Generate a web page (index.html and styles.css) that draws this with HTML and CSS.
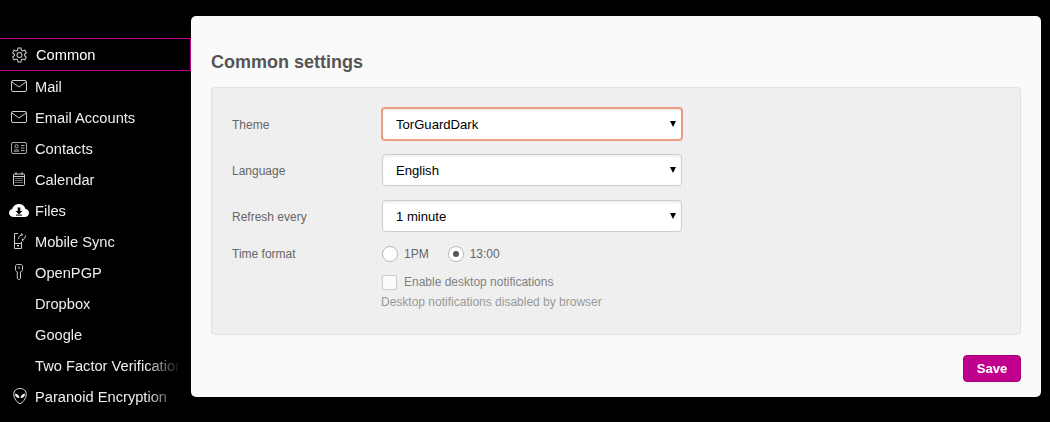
FILE: index.html
```html
<!DOCTYPE html>
<html lang="en">
<head>
<meta charset="utf-8">
<title>Common settings</title>
<link rel="stylesheet" href="styles.css">
</head>
<body>
<div class="app">
  <nav class="sidebar">
    <a class="nav-item active">
      <span class="nav-icon"><svg viewBox="1.4 0.4 13.2 13.4" width="15" height="16" fill="none" stroke="#ccc" stroke-width=".9"><path d="M6.7 1h2.6l.4 2 1.1.6 1.9-.7 1.3 2.3-1.5 1.3v1.2l1.5 1.3-1.3 2.3-1.9-.7-1.1.6-.4 2H6.7l-.4-2-1.1-.6-1.900.7L2 9l1.500-1.300V6.500L2 5.200l1.300-2.300 1.900.7 1.100-.6z"/><circle cx="8" cy="7.100" r="2.200"/></svg></span>
      <span class="nav-label">Common</span>
    </a>
    <a class="nav-item">
      <span class="nav-icon"><svg viewBox="0 0 16 12" width="16" height="12" fill="none" stroke="#ccc"><rect x=".5" y=".5" width="15" height="11" rx="1.500"/><path d="M1 2l7 5 7-5"/></svg></span>
      <span class="nav-label">Mail</span>
    </a>
    <a class="nav-item">
      <span class="nav-icon"><svg viewBox="0 0 16 12" width="16" height="12" fill="none" stroke="#ccc"><rect x=".5" y=".5" width="15" height="11" rx="1.500"/><path d="M1 2l7 5 7-5"/></svg></span>
      <span class="nav-label">Email Accounts</span>
    </a>
    <a class="nav-item">
      <span class="nav-icon"><svg viewBox="0 0 16 12" width="16" height="12" fill="none" stroke="#bbb" stroke-width=".9"><rect x=".5" y=".5" width="15" height="11" rx="1.500"/><circle cx="5.500" cy="4.300" r="1.600"/><path d="M3 9.200c.3-2 4.700-2 5 0zM10 3.500h3.500M10 6h3.500M10 8.500h3.500"/></svg></span>
      <span class="nav-label">Contacts</span>
    </a>
    <a class="nav-item">
      <span class="nav-icon icon-cal"><svg viewBox="0 0 12 14" width="12" height="14" fill="none" stroke="#ccc"><rect x=".5" y="2" width="11" height="11.500" rx="1"/><path d="M3 0v3M9 0v3M.5 4.500h11"/><path d="M2.500 6.500h7M2.500 8.500h7M2.500 10.500h7" stroke-dasharray="1 1"/></svg></span>
      <span class="nav-label">Calendar</span>
    </a>
    <a class="nav-item">
      <span class="nav-icon icon-files"><svg viewBox="0 0 20 13" width="20" height="13"><path fill="#fff" d="M4.500 13C2 13 0 11.300 0 9c0-2 1.400-3.500 3.300-3.900C3.900 2.300 6.500 0 10 0c3.200 0 5.600 1.900 6.300 4.800 2.100.3 3.700 2 3.700 4.100 0 2.300-1.900 4.100-4.300 4.100z"/><path fill="#000" d="M8.700 3.500h2.600v3.400h2.100L10 10.400 6.600 6.900h2.100z"/><rect fill="#000" x="7" y="10.600" width="6" height="1"/></svg></span>
      <span class="nav-label">Files</span>
    </a>
    <a class="nav-item">
      <span class="nav-icon icon-mobile"><svg viewBox="0 0 12 16" width="12" height="16" fill="none" stroke="#ccc"><path d="M4 .5H.5v15h7V8.500M.5 10.500h7"/><path d="M4.500 6C4.500 3.500 6.500 1.500 8.500 1.500M7 .5l1.500 1-1 1.500M11.500 2.500c0 2.500-1.700 4.500-3.500 4.500M9.500 8L8 7l1-1.500"/><rect x="3" y="12" width="2" height="1.500" fill="#ccc" stroke="none"/></svg></span>
      <span class="nav-label">Mobile Sync</span>
    </a>
    <a class="nav-item">
      <span class="nav-icon icon-key"><svg viewBox="0 0 8 16" width="8" height="16" fill="none" stroke="#ccc"><path d="M2.200.5h3.600c1 0 1.700.7 1.700 1.700v3.300c0 1.200-.8 2-2 2.300v6.700l-1.200 1H3.300l-1-1V7.800C1.100 7.500.5 6.700.5 5.500V2.200C.5 1.200 1.200.5 2.200.5z"/><rect x="3.500" y="2.500" width="1" height="2.500" fill="#ccc" stroke="none"/></svg></span>
      <span class="nav-label">OpenPGP</span>
    </a>
    <a class="nav-item"><span class="nav-icon"></span><span class="nav-label">Dropbox</span></a>
    <a class="nav-item"><span class="nav-icon"></span><span class="nav-label">Google</span></a>
    <a class="nav-item"><span class="nav-icon"></span><span class="nav-label">Two Factor Verification</span></a>
    <a class="nav-item">
      <span class="nav-icon icon-alien"><svg viewBox="0 0 14 16" width="14" height="16"><path fill="none" stroke="#ddd" d="M7 .5C3.200.5.700 3 .7 6.300.7 10 4.500 15.500 7 15.500s6.300-5.500 6.300-9.200C13.300 3 10.800.5 7 .5z"/><path fill="#eee" d="M1.800 5.800c2.600-.2 4.600 1.600 4.600 4.200C3.800 10.200 2 8.400 1.800 5.800zM12.200 5.800c-2.600-.2-4.600 1.600-4.600 4.200 2.600.2 4.400-1.600 4.600-4.200z"/></svg></span>
      <span class="nav-label">Paranoid Encryption</span>
    </a>
  </nav>

  <main class="panel">
    <h2 class="panel-title">Common settings</h2>
    <form class="settings">
      <div class="row row-focused">
        <label class="row-label">Theme</label>
        <div class="select-wrap focused"><select class="select"><option>TorGuardDark</option></select></div>
      </div>
      <div class="row row-select">
        <label class="row-label">Language</label>
        <div class="select-wrap"><select class="select"><option>English</option></select></div>
      </div>
      <div class="row row-select">
        <label class="row-label">Refresh every</label>
        <div class="select-wrap"><select class="select"><option>1 minute</option></select></div>
      </div>
      <div class="row row-time">
        <span class="row-label">Time format</span>
        <div class="radios">
          <label class="radio-option"><input class="radio" type="radio" name="tf">1PM</label>
          <label class="radio-option"><input class="radio" type="radio" name="tf" checked>13:00</label>
        </div>
      </div>
      <div class="row row-check">
        <span class="row-label"></span>
        <label class="check-option"><input class="check" type="checkbox" disabled>Enable desktop notifications</label>
      </div>
      <div class="row row-hint">
        <span class="row-label"></span>
        <span class="hint">Desktop notifications disabled by browser</span>
      </div>
    </form>
    <div class="actions"><button class="save" type="button">Save</button></div>
  </main>
</div>
</body>
</html>
```

FILE: styles.css
```css
* { box-sizing: border-box; }
html, body { margin: 0; height: 100%; }
body {
  background: #000;
  font-family: "Liberation Sans", Arial, sans-serif;
  overflow: hidden;
}
.app {
  display: flex;
  align-items: flex-start;
  width: 1050px;
  height: 422px;
  padding-top: 16px;
}
.sidebar {
  width: 191px;
  flex: none;
  padding-top: 22px;
}
.nav-item {
  display: flex;
  align-items: center;
  height: 31px;
  color: #eee;
  font-size: 14.67px;
  padding-left: 11px;
  padding-bottom: 1px;
}
.nav-item.active {
  height: 33px;
  border: 1px solid #c0008c;
  border-left: 0;
  color: #fff;
  padding: 0 0 0 12px;
}
.nav-icon {
  width: 24px;
  flex: none;
  display: flex;
  align-items: center;
}
.nav-icon svg { display: block; }
.icon-cal svg { margin-left: 2px; }
.icon-files svg { margin-left: -2px; }
.icon-mobile svg { margin-left: 3px; }
.icon-key svg { margin-left: 4px; }
.icon-alien svg { margin-left: 2px; }
.nav-label {
  flex: 1;
  min-width: 0;
  white-space: nowrap;
  overflow: hidden;
  margin-right: 10px;
  padding-top: 2px;
  -webkit-mask-image: linear-gradient(to right, #000 76%, transparent 100%);
  mask-image: linear-gradient(to right, #000 76%, transparent 100%);
}
.active .nav-label { padding-top: 0; }
.panel {
  width: 850px;
  height: 381px;
  flex: none;
  background: #fafafa;
  border-radius: 5px;
  padding: 0 20px;
  display: flex;
  flex-direction: column;
}
.panel-title {
  margin: 36px 0 14px;
  font-size: 18px;
  line-height: 21px;
  font-weight: bold;
  color: #555;
}
.settings {
  height: 248px;
  border: 1px solid #e0e0e0;
  border-radius: 4px;
  background: repeating-linear-gradient(to right, #eee 0, #eee 2px, #f0f0f0 2px, #f0f0f0 4px);
  padding: 19px 0 0 20px;
}
.row {
  display: flex;
  align-items: center;
  font-size: 12px;
  color: #666;
}
.row-focused { height: 34px; margin-bottom: 13px; }
.row-select { height: 32px; margin-bottom: 14px; }
.row-label { width: 150px; flex: none; color: #666; }
.row-focused .row-label, .row-select .row-label { padding-top: 2px; }
.row-time { height: 18px; margin-top: -1px; }
.row-check { height: 16px; margin-top: 11px; }
.row-hint { height: 14px; margin-top: 5px; }
.select-wrap {
  position: relative;
  width: 300px;
  height: 100%;
}
.select-wrap::after {
  content: "";
  position: absolute;
  right: 6px;
  top: 13px;
  border-left: 3px solid transparent;
  border-right: 3px solid transparent;
  border-top: 6px solid #000;
  pointer-events: none;
}
.select {
  appearance: none;
  -webkit-appearance: none;
  display: block;
  width: 100%;
  height: 100%;
  border: 1px solid #ccc;
  border-radius: 4px;
  background: #fff;
  box-shadow: inset 0 2px 2px rgba(0, 0, 0, 0.05);
  color: #000;
  font: 13.1px "Liberation Sans", Arial, sans-serif;
  padding: 0 0 0 13px;
  outline: 0;
}
.focused { width: 302px; margin-left: -1px; }
.focused .select {
  border: 2px solid #ec9c85;
}
.focused::after { right: 7px; top: 14px; }
.radios { display: flex; gap: 19px; }
.radio-option, .check-option {
  display: flex;
  align-items: center;
  gap: 6px;
  color: #666;
}
.radio {
  appearance: none;
  -webkit-appearance: none;
  width: 16px;
  height: 16px;
  margin: 0;
  border: 1px solid #bbb;
  border-radius: 50%;
  background: #fff;
  display: grid;
  place-content: center;
}
.radio:checked::before {
  content: "";
  display: block;
  width: 6px;
  height: 6px;
  border-radius: 50%;
  background: #555;
}
.check-option { color: #808080; gap: 7px; }
.check {
  appearance: none;
  -webkit-appearance: none;
  width: 15px;
  height: 15px;
  margin: 1px 0 0;
  border: 1px solid #ccc;
  border-radius: 2px;
  background: #fbfbfb;
}
.hint { color: #999; margin-left: -1px; }
.actions {
  display: flex;
  justify-content: flex-end;
  padding-top: 20px;
}
.save {
  width: 58px;
  height: 27px;
  border: 1px solid #a8007a;
  border-radius: 4px;
  background: #c0008c;
  color: #fff;
  font: bold 13px "Liberation Sans", Arial, sans-serif;
  padding: 0;
}
```
